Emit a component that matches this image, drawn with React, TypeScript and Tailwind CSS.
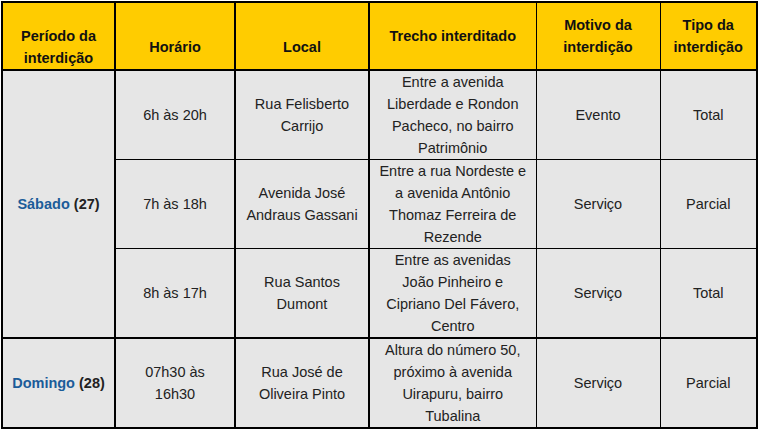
import { ReactNode } from "react"

interface CellProps {
  children: ReactNode;
  className?: string;
  rowSpan?: number;
}

function Head({ children, className = "" }: CellProps) {
  return (
    <th className={`bg-[#ffcc00] font-bold text-[#111] align-middle text-center px-1.5 border-black border-b-2 ${className}`}>
      {children}
    </th>
  )
}

function Cell({ children, className = "", rowSpan }: CellProps) {
  return (
    <td rowSpan={rowSpan} className={`bg-[#e6e6e6] align-middle text-center px-1.5 border-black ${className}`}>
      {children}
    </td>
  )
}

function Day({ name, num }: { name: string; num: string }) {
  return (
    <span className="font-bold">
      <span className="text-[#1b5c99]">{name}</span> <span className="text-[#222]">({num})</span>
    </span>
  )
}

export default function App() {
  return (
    <div className="w-[760px] h-[429px] bg-white pl-px pt-px">
      <table className="w-[757px] table-fixed border-collapse border-2 border-black font-['Liberation_Sans',Arial,sans-serif] text-[14.5px] leading-[22px] text-[#222]">
        <colgroup>
          <col className="w-[113px]" />
          <col className="w-[120px]" />
          <col className="w-[134px]" />
          <col className="w-[167px]" />
          <col className="w-[124px]" />
          <col className="w-[97px]" />
        </colgroup>
        <thead>
          <tr className="h-[68px]">
            <Head className="pt-[22px] border-r-2">Período da<br />interdição</Head>
            <Head className="pt-[22px] border-r-2">Horário</Head>
            <Head className="pt-[22px] border-r-2">Local</Head>
            <Head className="border-r">Trecho interditado</Head>
            <Head className="border-r">Motivo da<br />interdição</Head>
            <Head>Tipo da<br />interdição</Head>
          </tr>
        </thead>
        <tbody>
          <tr className="h-[89px]">
            <Cell rowSpan={3} className="border-r-2 border-b-2">
              <Day name="Sábado" num="27" />
            </Cell>
            <Cell className="border-r-2 border-b">6h às 20h</Cell>
            <Cell className="border-r-2 border-b">Rua Felisberto<br />Carrijo</Cell>
            <Cell className="border-r border-b">Entre a avenida<br />Liberdade e Rondon<br />Pacheco, no bairro<br />Patrimônio</Cell>
            <Cell className="border-r border-b">Evento</Cell>
            <Cell className="border-b">Total</Cell>
          </tr>
          <tr className="h-[89px]">
            <Cell className="border-r-2 border-b">7h às 18h</Cell>
            <Cell className="border-r-2 border-b">Avenida José<br />Andraus Gassani</Cell>
            <Cell className="border-r border-b">Entre a rua Nordeste e<br />a avenida Antônio<br />Thomaz Ferreira de<br />Rezende</Cell>
            <Cell className="border-r border-b">Serviço</Cell>
            <Cell className="border-b">Parcial</Cell>
          </tr>
          <tr className="h-[89px]">
            <Cell className="border-r-2 border-b-2">8h às 17h</Cell>
            <Cell className="border-r-2 border-b-2">Rua Santos<br />Dumont</Cell>
            <Cell className="border-r border-b-2">Entre as avenidas<br />João Pinheiro e<br />Cipriano Del Fávero,<br />Centro</Cell>
            <Cell className="border-r border-b-2">Serviço</Cell>
            <Cell className="border-b-2">Total</Cell>
          </tr>
          <tr className="h-[90px]">
            <Cell className="border-r-2">
              <Day name="Domingo" num="28" />
            </Cell>
            <Cell className="border-r-2">07h30 às<br />16h30</Cell>
            <Cell className="border-r-2">Rua José de<br />Oliveira Pinto</Cell>
            <Cell className="border-r">Altura do número 50,<br />próximo à avenida<br />Uirapuru, bairro<br />Tubalina</Cell>
            <Cell className="border-r">Serviço</Cell>
            <Cell>Parcial</Cell>
          </tr>
        </tbody>
      </table>
    </div>
  )
}
